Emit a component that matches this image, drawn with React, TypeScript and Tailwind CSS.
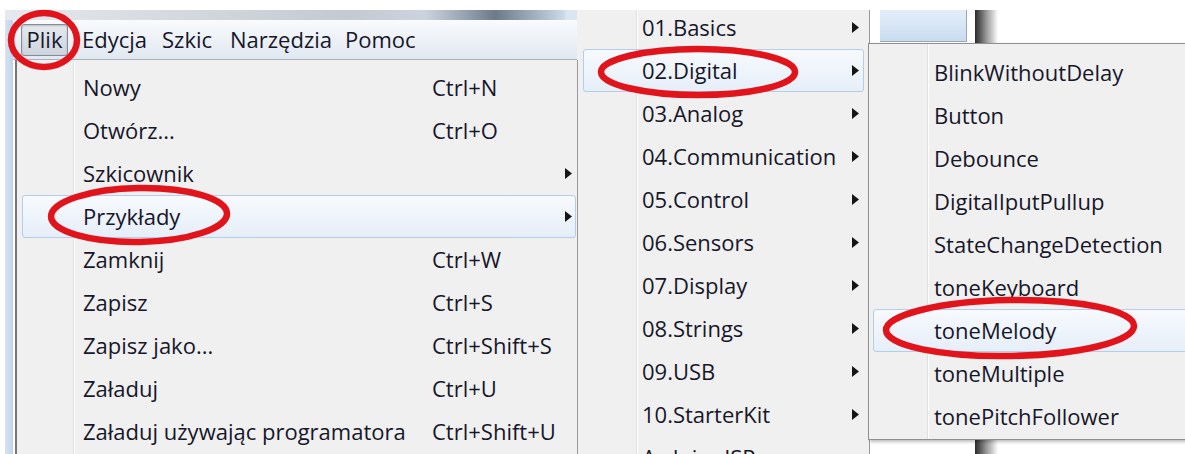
import React from 'react'

type Item = {
  label: string
  shortcut?: string
  sub?: boolean
  active?: boolean
}

const fileMenu: Item[] = [
  { label: 'Nowy', shortcut: 'Ctrl+N' },
  { label: 'Otwórz...', shortcut: 'Ctrl+O' },
  { label: 'Szkicownik', sub: true },
  { label: 'Przykłady', sub: true, active: true },
  { label: 'Zamknij', shortcut: 'Ctrl+W' },
  { label: 'Zapisz', shortcut: 'Ctrl+S' },
  { label: 'Zapisz jako...', shortcut: 'Ctrl+Shift+S' },
  { label: 'Załaduj', shortcut: 'Ctrl+U' },
  { label: 'Załaduj używając programatora', shortcut: 'Ctrl+Shift+U' },
]

const examples: Item[] = [
  { label: '01.Basics', sub: true },
  { label: '02.Digital', sub: true, active: true },
  { label: '03.Analog', sub: true },
  { label: '04.Communication', sub: true },
  { label: '05.Control', sub: true },
  { label: '06.Sensors', sub: true },
  { label: '07.Display', sub: true },
  { label: '08.Strings', sub: true },
  { label: '09.USB', sub: true },
  { label: '10.StarterKit', sub: true },
  { label: 'ArduinoISP' },
]

const digital: Item[] = [
  { label: 'BlinkWithoutDelay' },
  { label: 'Button' },
  { label: 'Debounce' },
  { label: 'DigitalIputPullup' },
  { label: 'StateChangeDetection' },
  { label: 'toneKeyboard' },
  { label: 'toneMelody', active: true },
  { label: 'toneMultiple' },
  { label: 'tonePitchFollower' },
]

function Arrow() {
  return (
    <svg width="7" height="11" viewBox="0 0 7 11" className="shrink-0">
      <path d="M0 0 L7 5.5 L0 11 Z" fill="#151515" />
    </svg>
  )
}

function Row({ item, labelWidth }: { item: Item; labelWidth?: string }) {
  const hl = item.active
    ? 'border-[#b4cdea] bg-gradient-to-b from-[#f7fafe] to-[#e6eef8]'
    : 'border-transparent'
  return (
    <div className={`relative flex h-[43px] items-center rounded-[3px] border ${hl}`}>
      <span className={`whitespace-nowrap pb-[2px] ${labelWidth ?? ''}`}>{item.label}</span>
      {item.shortcut && <span className="whitespace-nowrap pb-[2px]">{item.shortcut}</span>}
      <span className="flex-1" />
      {item.sub && <Arrow />}
    </div>
  )
}

export default function App() {
  return (
    <div className="relative h-[454px] w-[1185px] overflow-hidden bg-white font-[family-name:Open_Sans,sans-serif] text-[22px] leading-none text-[#17172a]">
      <div className="h-[10px]" />

      <div className="relative flex h-[444px] overflow-hidden">
        <div className="w-[5px] bg-white" />

        {/* sketch window: title strip, frame and menu bar */}
        <div className="flex w-[572px] flex-col">
          <div className="h-[10px] bg-gradient-to-r from-[#e6e9ed] via-[#c4cad2] via-60% to-[#dbe6f2]">
            <div className="ml-[420px] h-full w-[140px] bg-gradient-to-r from-transparent via-[#6d7a8a] to-[#cddbea]" />
          </div>
          <div className="flex flex-1">
            <div className="w-[8px] bg-gradient-to-r from-[#d6e4f3] to-[#bfd3ea]" />
            <div className="flex-1">
              <div className="flex h-[40px] items-center border-b border-[#a9b3bf] bg-gradient-to-b from-[#f9fbfd] to-[#e1e8f1] pl-[8px]">
                <span className="flex h-[32px] w-[47px] items-center justify-center rounded-[3px] border border-[#858d98] bg-gradient-to-b from-[#e6eaef] to-[#cdd4dd] pb-[2px] shadow-[inset_0_1px_2px_rgba(0,0,0,0.2)]">
                  Plik
                </span>
                <span className="ml-[14px] w-[80px] pb-[2px]">Edycja</span>
                <span className="w-[68px] pb-[2px]">Szkic</span>
                <span className="w-[115px] pb-[2px]">Narzędzia</span>
                <span className="pb-[2px]">Pomoc</span>
              </div>
            </div>
          </div>
        </div>

        {/* area behind the open menus */}
        <div className="flex flex-1">
          <div className="w-[291px] bg-[#f0f0f0]" />
          <div className="w-[107px] bg-white pl-[12px]">
            <div className="h-[32px] w-[87px] border-b border-r border-[#9aa6b4] bg-gradient-to-b from-[#e4eef9] to-[#c9dcf0]" />
          </div>
          <div className="w-[23px] bg-gradient-to-r from-[#2b2b2b] via-[#9a9a9a] to-white" />
          <div className="flex-1 bg-white" />
        </div>

        {/* Plik menu */}
        <div className="absolute left-[15px] top-[50px] h-[420px] w-[563px] border-l-2 border-r border-l-[#767676] border-r-[#9a9a9a] bg-[#f0f0f0] pt-[6px]">
          <div className="absolute bottom-0 left-[56px] top-0 w-[2px] border-l border-r border-l-[#e0e0e0] border-r-white" />
          <div className="relative ml-[5px] mr-[1px]">
            {fileMenu.map((item) => (
              <div key={item.label} className="[&>div]:pl-[60px] [&>div]:pr-[3px]">
                <Row item={item} labelWidth="w-[349px]" />
              </div>
            ))}
          </div>
        </div>

        {/* Przykłady submenu */}
        <div className="absolute left-[578px] top-[-7px] h-[460px] w-[292px] border-r border-[#9a9a9a] bg-[#f0f0f0] pt-[3px]">
          <div className="absolute bottom-0 left-[58px] top-0 w-[2px] border-l border-r border-l-[#e0e0e0] border-r-white" />
          <div className="relative ml-[5px] mr-[5px]">
            {examples.map((item) => (
              <div key={item.label} className="[&>div]:pl-[58px] [&>div]:pr-[4px]">
                <Row item={item} />
              </div>
            ))}
          </div>
        </div>

        {/* 02.Digital submenu */}
        <div className="absolute left-[868px] top-[33px] w-[340px] border border-[#8f8f8f] bg-[#f0f0f0] pb-[1px] pt-[7px] shadow-[2px_2px_3px_rgba(0,0,0,0.25)]">
          <div className="absolute bottom-0 left-[58px] top-0 w-[2px] border-l border-r border-l-[#e0e0e0] border-r-white" />
          <div className="relative ml-[4px]">
            {digital.map((item) => (
              <div key={item.label} className="[&>div]:pl-[60px]">
                <Row item={item} />
              </div>
            ))}
          </div>
        </div>
      </div>

      {/* red pen marks */}
      <svg className="pointer-events-none absolute left-0 top-0" width="1185" height="454" viewBox="0 0 1185 454">
        <g fill="none" stroke="#e1141c" strokeWidth="6.5">
          <ellipse cx="44" cy="40" rx="33" ry="27" />
          <ellipse cx="139" cy="215" rx="88" ry="27" transform="rotate(-1 139 215)" />
          <ellipse cx="698" cy="72" rx="97" ry="23" />
          <ellipse cx="1010" cy="328" rx="124" ry="28" transform="rotate(-1 1010 328)" />
        </g>
      </svg>
    </div>
  )
}
